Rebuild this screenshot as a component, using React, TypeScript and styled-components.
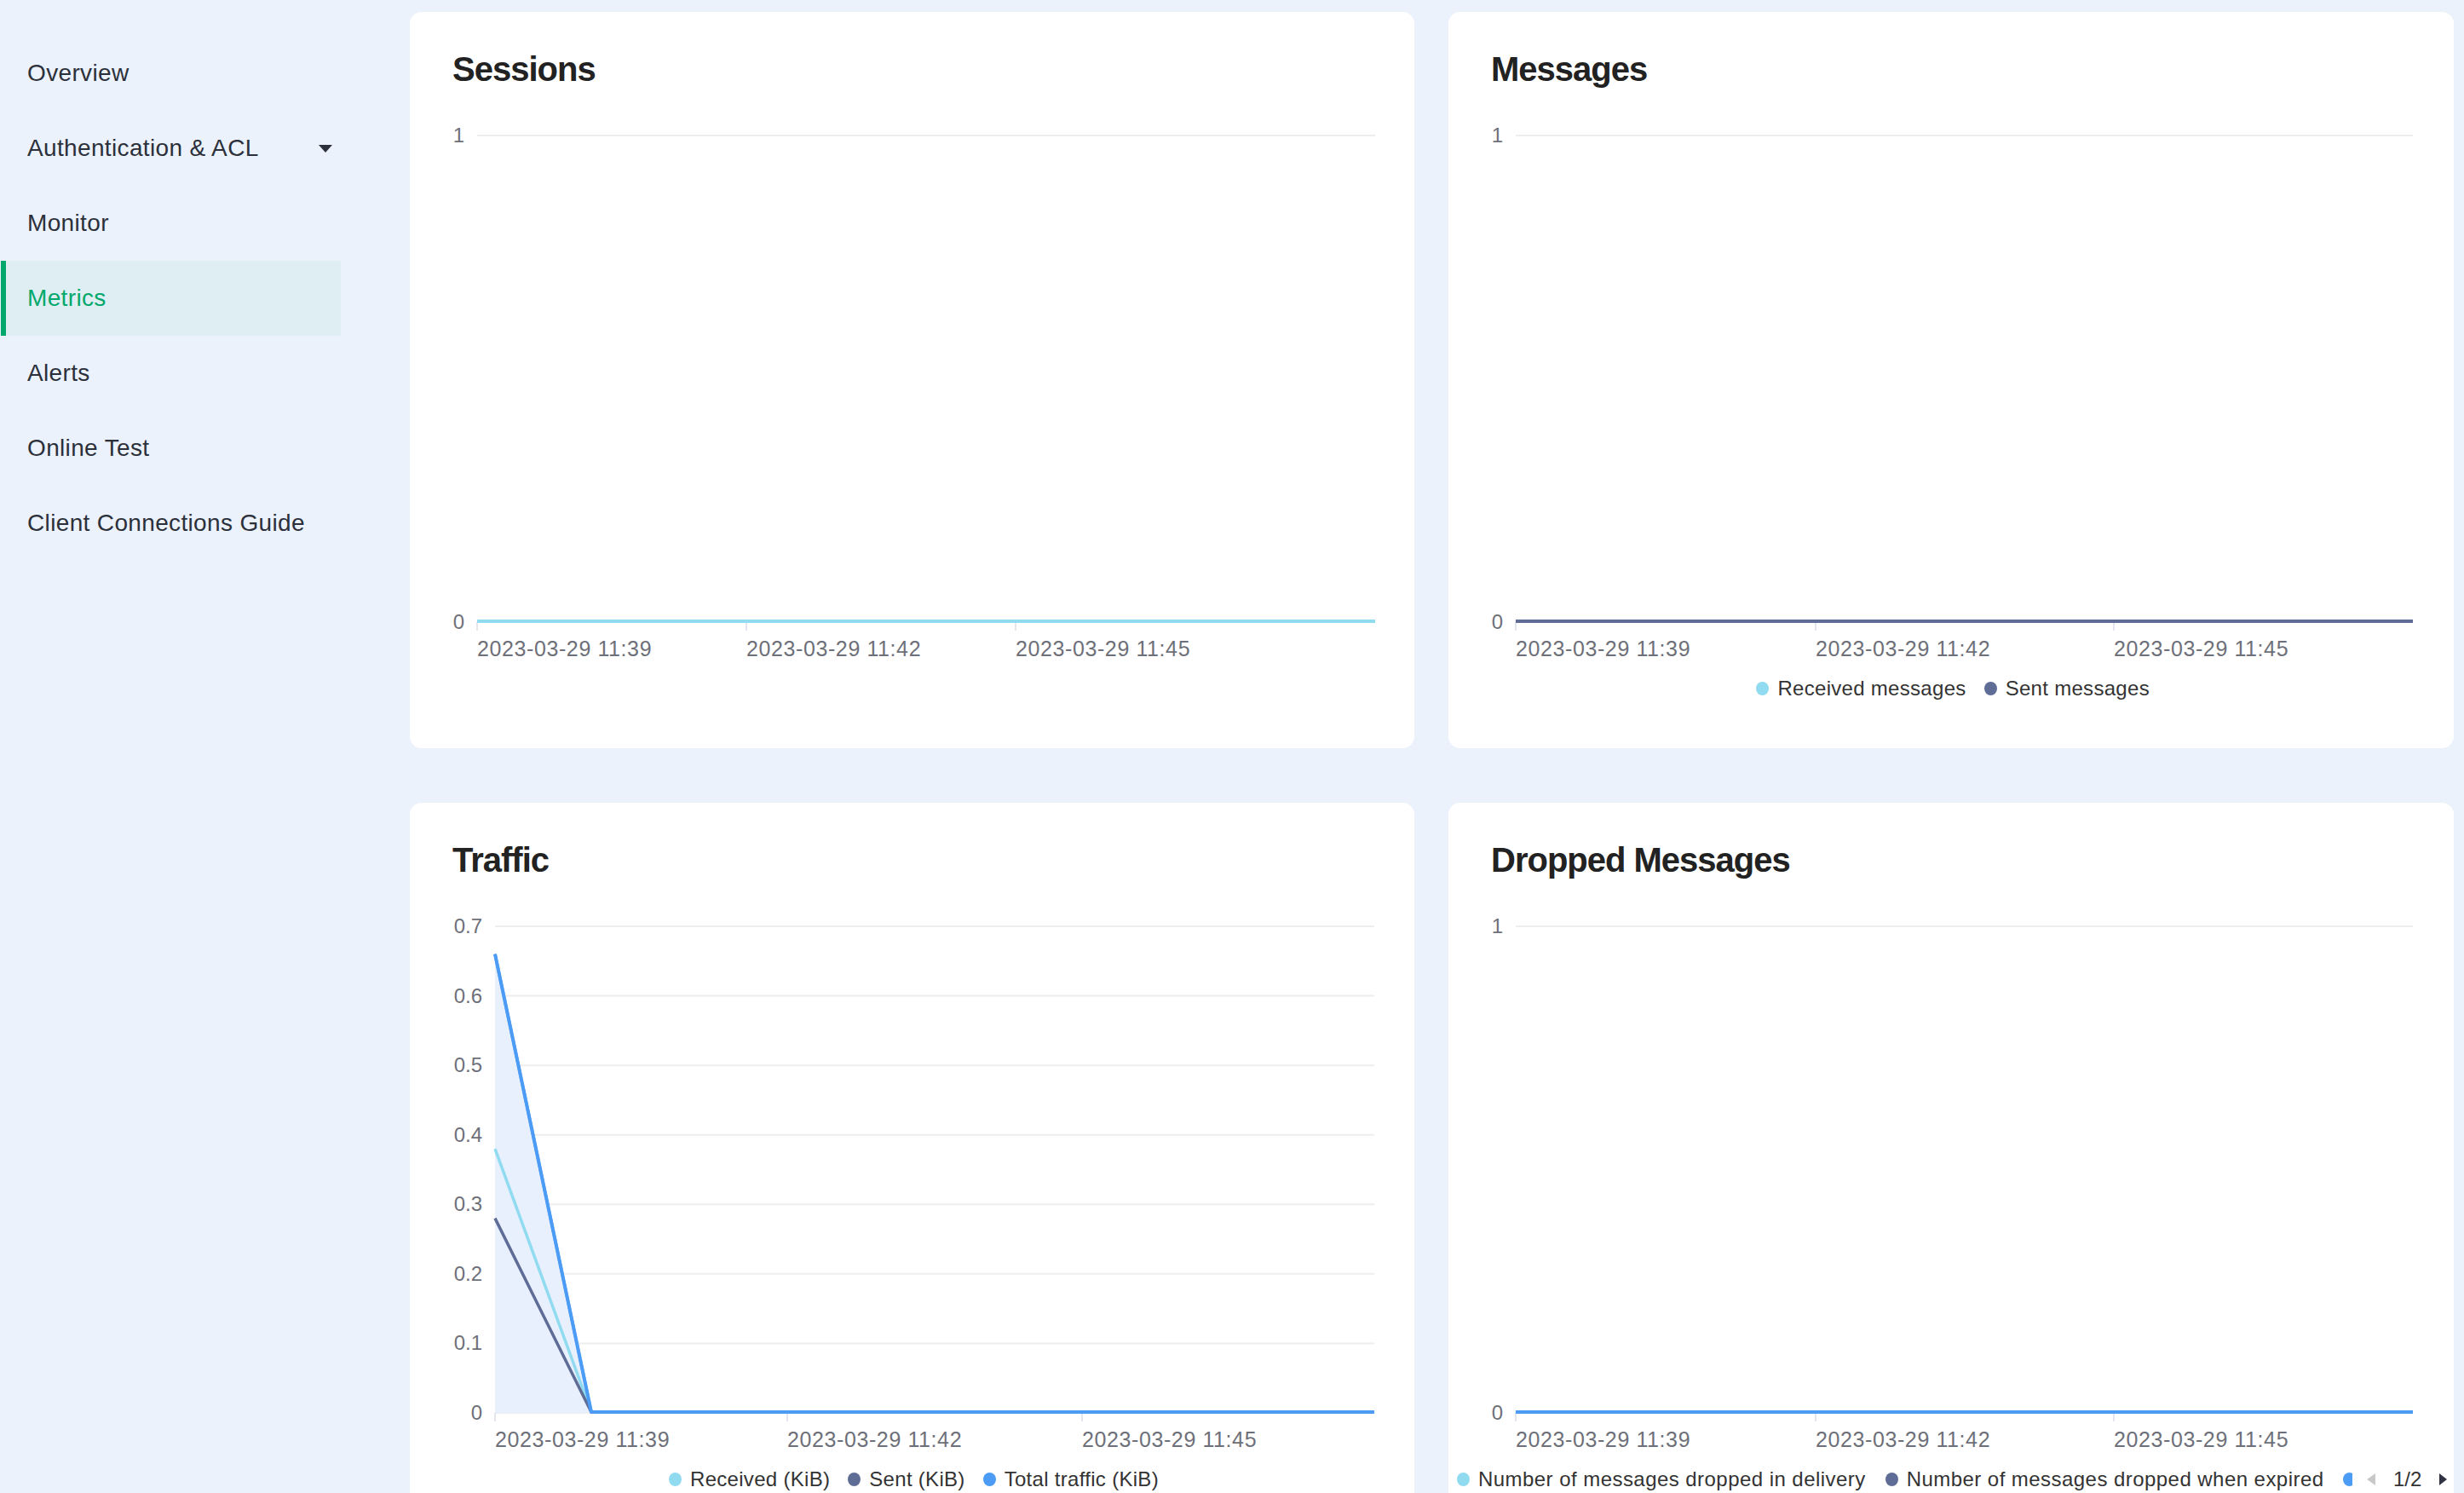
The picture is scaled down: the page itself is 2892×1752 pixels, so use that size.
import styled, { createGlobalStyle } from "styled-components";

const GlobalStyle = createGlobalStyle`
  html, body {
    margin: 0;
    padding: 0;
    background: #ebf2fc;
    font-family: "Liberation Sans", Arial, sans-serif;
    overflow: hidden;
  }
`;

const Layout = styled.div`
  display: flex;
  height: 100vh;
  overflow: hidden;
  background: #ebf2fc;
`;

const Sidebar = styled.nav`
  width: 400px;
  flex-shrink: 0;
  padding-top: 42px;
  display: flex;
  flex-direction: column;
`;

const MenuItem = styled.div<{ $active?: boolean }>`
  height: 88px;
  display: flex;
  align-items: center;
  justify-content: space-between;
  padding: 0 7px 0 25px;
  margin-left: 1px;
  font-size: 28px;
  letter-spacing: 0.35px;
  color: ${(p) => (p.$active ? "#00a86b" : "#2b303b")};
  background: ${(p) => (p.$active ? "#dfeef3" : "transparent")};
  border-left: 6px solid ${(p) => (p.$active ? "#00a86b" : "transparent")};
`;

const Caret = styled.span`
  width: 0;
  height: 0;
  border-left: 8px solid transparent;
  border-right: 8px solid transparent;
  border-top: 9px solid #2b303b;
  margin-right: 3px;
`;

const Main = styled.main`
  flex: 1;
  padding: 14px 13px 0 81px;
  display: grid;
  grid-template-columns: repeat(2, 1fr);
  column-gap: 40px;
  row-gap: 64px;
  align-content: start;
`;

const Card = styled.section`
  height: 864px;
  background: #fff;
  border-radius: 14px;
  padding: 0 46px 0 50px;
  display: flex;
  flex-direction: column;
  flex-shrink: 0;
`;

const Title = styled.h2`
  margin: 44px 0 0;
  height: 46px;
  line-height: 46px;
  font-size: 40px;
  font-weight: bold;
  letter-spacing: -1px;
  color: #222;
`;

const ChartSvg = styled.svg`
  display: block;
  margin-top: 35px;
  flex-shrink: 0;
`;

const Legend = styled.div`
  height: 38px;
  display: flex;
  align-items: center;
  justify-content: center;
  gap: 21px;
`;

const LegendItem = styled.div`
  display: flex;
  align-items: center;
  gap: 10px;
  font-size: 24px;
  letter-spacing: 0.3px;
  color: #333;
  white-space: nowrap;
  flex-shrink: 0;
`;

const Dot = styled.span<{ $color: string }>`
  width: 15px;
  height: 16px;
  border-radius: 50%;
  background: ${(p) => p.$color};
  flex-shrink: 0;
`;

const ScrollLegend = styled.div`
  height: 38px;
  display: flex;
  align-items: center;
  margin: 0 -38px 0 -40px;
`;

const LegendViewport = styled.div`
  width: 1051px;
  flex-shrink: 0;
  overflow: hidden;
  display: flex;
  align-items: center;
  gap: 23px;

  ${LegendItem} {
    letter-spacing: 0.45px;
  }
`;

const Pager = styled.div`
  display: flex;
  align-items: center;
  gap: 21px;
  margin-left: 17px;
  font-size: 24px;
  color: #333;
`;

const PageArrow = styled.span<{ $dir: "left" | "right"; $disabled?: boolean }>`
  width: 0;
  height: 0;
  border-top: 7px solid transparent;
  border-bottom: 7px solid transparent;
  ${(p) =>
    p.$dir === "left"
      ? `border-right: 10px solid ${p.$disabled ? "#c8c8c8" : "#2f3342"};`
      : `border-left: 9px solid ${p.$disabled ? "#c8c8c8" : "#2f3342"};`}
`;

const C_RECV = "#91dbf0";
const C_SENT = "#5f6c96";
const C_TOTAL = "#4c9cf6";

const W = 1083;
const H = 650;
const TOP = 20;
const ZERO = 591;
const FONT = "'Liberation Sans', Arial, sans-serif";

type Series = { color: string; points: [number, number][]; width?: number; area?: string };

type ChartProps = {
  plotLeft: number;
  plotRight: number;
  yLabels: string[];
  ticks: { x: number; label: string }[];
  series: Series[];
};

const toPath = (pts: [number, number][]) => pts.map(([x, y], j) => `${j ? "L" : "M"}${x} ${y}`).join(" ");

function Chart({ plotLeft, plotRight, yLabels, ticks, series }: ChartProps) {
  const step = (ZERO - TOP) / (yLabels.length - 1);
  return (
    <ChartSvg width={W} height={H} viewBox={`0 0 ${W} ${H}`}>
      {yLabels.map((label, i) => {
        const y = ZERO - i * step;
        return (
          <g key={label}>
            <line x1={plotLeft} x2={plotRight} y1={y} y2={y} stroke="#eeeeee" strokeWidth={2} />
            <text x={plotLeft - 15} y={y + 8} textAnchor="end" fontSize={24} fill="#6e7079" fontFamily={FONT}>
              {label}
            </text>
          </g>
        );
      })}
      {ticks.map((t) => (
        <g key={t.label}>
          <line x1={t.x} x2={t.x} y1={ZERO} y2={ZERO + 10} stroke="#e3e6ee" strokeWidth={2} />
          <text x={t.x} y={631} fontSize={25} letterSpacing={0.6} fill="#6e7079" fontFamily={FONT}>
            {t.label}
          </text>
        </g>
      ))}
      {/* areas go under every line */}
      {series
        .filter((s) => s.area)
        .map((s, i) => {
          const last = s.points[s.points.length - 1];
          return (
            <path
              key={`a${i}`}
              d={`${toPath(s.points)} L${last[0]} ${ZERO} L${s.points[0][0]} ${ZERO} Z`}
              fill={s.area}
            />
          );
        })}
      {series.map((s, i) => (
        <path
          key={i}
          d={toPath(s.points)}
          fill="none"
          stroke={s.color}
          strokeWidth={s.width ?? 3.5}
          strokeLinejoin="round"
        />
      ))}
    </ChartSvg>
  );
}

const flat = (left: number, right: number): [number, number][] => [
  [left, ZERO - 1],
  [right, ZERO - 1],
];

const menu = [
  "Overview",
  "Authentication & ACL",
  "Monitor",
  "Metrics",
  "Alerts",
  "Online Test",
  "Client Connections Guide",
];

const trafficY = ["0", "0.1", "0.2", "0.3", "0.4", "0.5", "0.6", "0.7"];
const yv = (v: number) => ZERO - (v / 0.7) * (ZERO - TOP);

const wideTicks = [
  { x: 29, label: "2023-03-29 11:39" },
  { x: 381, label: "2023-03-29 11:42" },
  { x: 731, label: "2023-03-29 11:45" },
];

export default function App() {
  return (
    <Layout>
      <GlobalStyle />
      <Sidebar>
        {menu.map((m) => (
          <MenuItem key={m} $active={m === "Metrics"}>
            <span>{m}</span>
            {m === "Authentication & ACL" && <Caret />}
          </MenuItem>
        ))}
      </Sidebar>
      <Main>
        <Card>
          <Title>Sessions</Title>
          <Chart
            plotLeft={29}
            plotRight={1083}
            yLabels={["0", "1"]}
            ticks={[
              { x: 29, label: "2023-03-29 11:39" },
              { x: 345, label: "2023-03-29 11:42" },
              { x: 661, label: "2023-03-29 11:45" },
            ]}
            series={[{ color: C_RECV, points: flat(29, 1083), width: 4 }]}
          />
        </Card>
        <Card>
          <Title>Messages</Title>
          <Chart
            plotLeft={29}
            plotRight={1082}
            yLabels={["0", "1"]}
            ticks={wideTicks}
            series={[
              { color: C_RECV, points: flat(29, 1082), width: 4 },
              { color: C_SENT, points: flat(29, 1082), width: 4 },
            ]}
          />
          <Legend>
            <LegendItem>
              <Dot $color={C_RECV} />
              Received messages
            </LegendItem>
            <LegendItem>
              <Dot $color={C_SENT} />
              Sent messages
            </LegendItem>
          </Legend>
        </Card>
        <Card>
          <Title>Traffic</Title>
          <Chart
            plotLeft={50}
            plotRight={1082}
            yLabels={trafficY}
            ticks={[
              { x: 50, label: "2023-03-29 11:39" },
              { x: 393, label: "2023-03-29 11:42" },
              { x: 739, label: "2023-03-29 11:45" },
            ]}
            series={[
              {
                color: C_TOTAL,
                area: "#e8f0fd",
                points: [
                  [50, yv(0.66)],
                  [163, ZERO - 1],
                ],
              },
              {
                color: C_RECV,
                points: [
                  [50, yv(0.38)],
                  [163, ZERO - 1],
                  [1082, ZERO - 1],
                ],
              },
              {
                color: C_SENT,
                points: [
                  [50, yv(0.28)],
                  [163, ZERO - 1],
                  [1082, ZERO - 1],
                ],
              },
              {
                color: C_TOTAL,
                width: 4,
                points: [
                  [50, yv(0.66)],
                  [163, ZERO - 1],
                  [1082, ZERO - 1],
                ],
              },
            ]}
          />
          <Legend>
            <LegendItem>
              <Dot $color={C_RECV} />
              Received (KiB)
            </LegendItem>
            <LegendItem>
              <Dot $color={C_SENT} />
              Sent (KiB)
            </LegendItem>
            <LegendItem>
              <Dot $color={C_TOTAL} />
              Total traffic (KiB)
            </LegendItem>
          </Legend>
        </Card>
        <Card>
          <Title>Dropped Messages</Title>
          <Chart
            plotLeft={29}
            plotRight={1082}
            yLabels={["0", "1"]}
            ticks={wideTicks}
            series={[
              { color: C_RECV, points: flat(29, 1082), width: 4 },
              { color: C_SENT, points: flat(29, 1082), width: 4 },
              { color: C_TOTAL, points: flat(29, 1082), width: 4 },
            ]}
          />
          <ScrollLegend>
            <LegendViewport>
              <LegendItem>
                <Dot $color={C_RECV} />
                Number of messages dropped in delivery
              </LegendItem>
              <LegendItem>
                <Dot $color={C_SENT} />
                Number of messages dropped when expired
              </LegendItem>
              <LegendItem>
                <Dot $color={C_TOTAL} />
              </LegendItem>
            </LegendViewport>
            <Pager>
              <PageArrow $dir="left" $disabled />
              <span>1/2</span>
              <PageArrow $dir="right" />
            </Pager>
          </ScrollLegend>
        </Card>
      </Main>
    </Layout>
  );
}
